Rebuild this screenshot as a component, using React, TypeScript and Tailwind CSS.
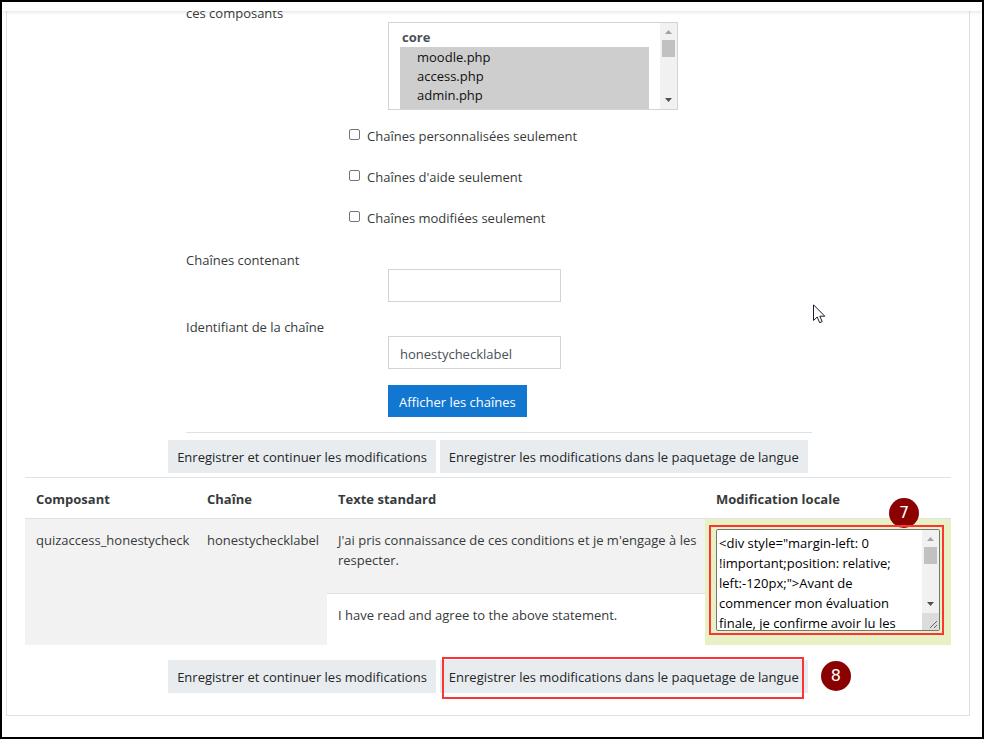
import { useState } from 'react';
import type { ReactNode } from 'react';

const COMPONENTS = ['moodle.php', 'access.php', 'admin.php', 'analytics.php', 'antivirus.php'];

const FILTERS = [
  { id: 'customized', label: 'Chaînes personnalisées seulement' },
  { id: 'helps', label: "Chaînes d'aide seulement" },
  { id: 'modified', label: 'Chaînes modifiées seulement' },
];

const LOCAL_TEXT =
  '<div style="margin-left: 0 !important;position: relative; left:-120px;">Avant de commencer mon évaluation finale, je confirme avoir lu les conditions de passation.</div>';

function Scrollbar({ grip = false }: { grip?: boolean }) {
  return (
    <div className="flex w-[17px] shrink-0 flex-col bg-[#f1f1f1]" aria-hidden="true">
      <svg width="17" height="17" viewBox="0 0 17 17" className="shrink-0">
        <path d="M5 11h7L8.500 7z" fill="#a3a3a3" />
      </svg>
      <div className="mx-[2px] h-[17px] shrink-0 bg-[#c1c1c1]" />
      <div className="flex-1" />
      <svg width="17" height="17" viewBox="0 0 17 17" className="shrink-0">
        <path d="M5 6h7L8.500 10z" fill="#505050" />
      </svg>
      {grip && (
        <svg width="17" height="17" viewBox="0 0 17 17" className="shrink-0 bg-[#dcdcdc]">
          <path d="M8 15L15 8M12 15L15 12" stroke="#6b6b6b" strokeWidth="1" />
        </svg>
      )}
    </div>
  );
}

function StepBadge({ children, className }: { children: ReactNode; className: string }) {
  return (
    <span
      className={`absolute flex size-[30px] items-center justify-center rounded-full bg-[#8b0000] font-['DejaVu_Sans'] text-[16px] leading-[20px] text-white ${className}`}
    >
      {children}
    </span>
  );
}

function SaveButtons({ highlighted = false }: { highlighted?: boolean }) {
  const btn = 'h-[33px] bg-[#e9ecef] px-[9px] text-[#212529]';
  return (
    <div className="flex justify-center gap-[4px]">
      <button type="submit" className={btn}>
        Enregistrer et continuer les modifications
      </button>
      <div className="relative">
        <button type="submit" className={btn}>
          Enregistrer les modifications dans le paquetage de langue
        </button>
        {highlighted && (
          <>
            <span className="pointer-events-none absolute -top-[3px] right-[4px] -bottom-[6px] left-[2px] border-2 border-[#fb3535]" />
            <StepBadge className="top-[1px] left-full ml-[13px]">8</StepBadge>
          </>
        )}
      </div>
    </div>
  );
}

function TextRow({ id, label, value = '' }: { id: string; label: string; value?: string }) {
  return (
    <div className="mb-[15px]">
      <label htmlFor={id} className="block h-[19px]">
        {label}
      </label>
      <input
        id={id}
        type="text"
        defaultValue={value}
        className="ml-[202px] block h-[33px] w-[173px] border border-[#ced4da] bg-white px-[11px] pt-[2px] text-[#495057]"
      />
    </div>
  );
}

export default function App() {
  const [selected, setSelected] = useState(COMPONENTS);

  return (
    <div className="relative min-h-screen border-2 border-black bg-white font-['Open_Sans','Noto_Sans',sans-serif] text-[13px] leading-[20px] text-[#373a3c]">
      <header className="relative z-10 h-[9px] bg-white shadow-[0_1px_4px_rgba(0,0,0,0.12)]" />
      <main className="mr-[12px] mb-[21px] ml-[4px] overflow-hidden border border-t-0 border-[#dee2e6] px-[18px] pb-[22px]">
        <form onSubmit={(e) => e.preventDefault()}>
          <section className="mr-[139px] ml-[161px] border-b border-[#dee2e6] pb-[15px]">
            <div className="flex items-start">
              <label htmlFor="components" className="-mt-[8px] w-[202px] shrink-0">
                ces composants
              </label>
              <div className="mt-[11px] flex h-[88px] w-[290px] border border-[#ced4da]">
                <select
                  id="components"
                  multiple
                  value={selected}
                  onChange={(e) => setSelected(Array.from(e.target.selectedOptions, (o) => o.value))}
                  className="min-w-0 flex-1 overflow-hidden bg-white px-[11px] pt-[5px] text-[#495057] [scrollbar-width:none]"
                >
                  <optgroup label="core" className="font-bold">
                    {COMPONENTS.map((name) => (
                      <option
                        key={name}
                        value={name}
                        className="h-[19px] pt-[1px] pb-0 pl-[17px] font-normal text-[#101010] checked:bg-[#cecece]"
                      >
                        {name}
                      </option>
                    ))}
                  </optgroup>
                </select>
                <Scrollbar />
              </div>
            </div>

            <div className="mt-[16px] ml-[163px] flex flex-col gap-[21px]">
              {FILTERS.map((f) => (
                <div key={f.id} className="flex items-start gap-[7px]">
                  <input
                    id={f.id}
                    type="checkbox"
                    className="mt-[3px] size-[11px] appearance-none rounded-[2px] border border-[#767676] bg-white checked:bg-[#1177d1]"
                  />
                  <label htmlFor={f.id}>{f.label}</label>
                </div>
              ))}
            </div>

            <div className="mt-[22px]">
              <TextRow id="substring" label="Chaînes contenant" />
              <TextRow id="stringid" label="Identifiant de la chaîne" value="honestychecklabel" />
            </div>
            <div className="pt-[16px] -mt-[15px]">
              <button type="submit" className="ml-[202px] block h-[32px] bg-[#1177d1] px-[11px] pt-[2px] text-white">
                Afficher les chaînes
              </button>
            </div>
          </section>
        </form>

        <form onSubmit={(e) => e.preventDefault()}>
          <div className="pt-[7px] pb-[4px]">
            <SaveButtons />
          </div>
          <table className="mb-[15px] w-full table-fixed border-collapse text-left align-top">
            <colgroup>
              <col className="w-[171px]" />
              <col className="w-[131px]" />
              <col />
              <col className="w-[246px]" />
            </colgroup>
            <thead>
              <tr className="h-[41px] border-y border-[#dee2e6]">
                <th className="px-[11px] pt-[2px] font-bold">Composant</th>
                <th className="px-[11px] pt-[2px] font-bold">Chaîne</th>
                <th className="px-[11px] pt-[2px] font-bold">Texte standard</th>
                <th className="px-[11px] pt-[2px] font-bold">Modification locale</th>
              </tr>
            </thead>
            <tbody className="align-top">
              <tr className="h-[75px]">
                <td rowSpan={2} className="bg-[#f2f2f2] py-[11px] pl-[11px]">
                  quizaccess_honestycheck
                </td>
                <td rowSpan={2} className="bg-[#f2f2f2] py-[11px] pl-[11px]">
                  honestychecklabel
                </td>
                <td className="border-b border-[#dee2e6] bg-[#f2f2f2] py-[11px] pl-[11px]">
                  J'ai pris connaissance de ces conditions et je m'engage à les respecter.
                </td>
                <td rowSpan={2} className="bg-[#e7f1c3] px-[11px] pt-[10px] pb-[14px]">
                  <div className="relative">
                    <div className="flex h-[102px] overflow-hidden rounded-[2px] border border-[#767676] bg-white">
                      <textarea
                        aria-label="Modification locale"
                        defaultValue={LOCAL_TEXT}
                        className="min-w-0 flex-1 resize-none overflow-hidden px-[2px] pt-[3px] text-black"
                      />
                      <Scrollbar grip />
                    </div>
                    <StepBadge className="-top-[31px] right-[21px]">7</StepBadge>
                    <span className="pointer-events-none absolute -top-[4px] -right-[4px] -bottom-[4px] -left-[7px] border-2 border-[#fb3535]" />
                  </div>
                </td>
              </tr>
              <tr>
                <td className="py-[11px] pl-[11px]">I have read and agree to the above statement.</td>
              </tr>
            </tbody>
          </table>
          <SaveButtons highlighted />
        </form>
      </main>

      <svg
        className="pointer-events-none absolute top-[302px] left-[811px]"
        width="13"
        height="20"
        viewBox="0 0 13 20"
        aria-hidden="true"
      >
        <path
          d="M.5.8V16.500L4.200 13L6.700 18.700L9.200 17.600L6.800 12.200H11.800Z"
          fill="#fff"
          stroke="#1b1b2b"
          strokeWidth="1"
        />
      </svg>
    </div>
  );
}
